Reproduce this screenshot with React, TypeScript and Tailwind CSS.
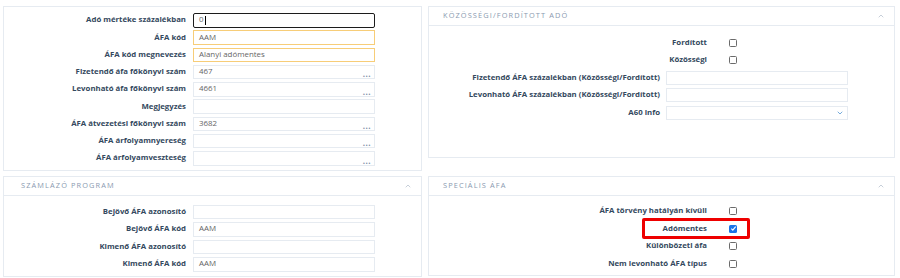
import { ChevronDown, ChevronUp } from "lucide-react";

type FieldProps = {
  label: string;
  value?: string;
  dots?: boolean;
  tone?: "focus" | "warn" | "plain";
};

const Field = ({ label, value = "", dots, tone = "plain" }: FieldProps) => {
  const border =
    tone === "focus"
      ? "border-[1.5px] border-[#1c1c1c] rounded-[2px]"
      : tone === "warn"
        ? "border border-[#f7cd78]"
        : "border border-[#e6ebf1]";
  return (
    <div className="flex items-center h-[14.5px]">
      <div className="w-[182px] shrink-0 text-right font-bold text-[7.8px] text-[#34495e]">
        {label}
      </div>
      <div
        className={`relative ml-[7px] w-[182px] h-[14.5px] flex items-center pl-[5px] text-[7.9px] text-[#666] bg-white ${border}`}
      >
        {value}
        {tone === "focus" && <span className="ml-[1px] w-[1px] h-[9px] bg-black" />}
        {dots && (
          <span className="absolute right-[3px] bottom-[0px] text-[8px] leading-[8px] font-bold text-[#7d8ea6] tracking-[0.5px]">
            ...
          </span>
        )}
      </div>
    </div>
  );
};

const CheckRow = ({
  label,
  checked,
  marked,
}: {
  label: string;
  checked?: boolean;
  marked?: boolean;
}) => (
  <div className="relative flex items-center h-[15px]">
    <div className="w-[278px] shrink-0 text-right font-bold text-[7.8px] text-[#34495e]">
      {label}
    </div>
    <div className="ml-[22px]">
      {checked ? (
        <div className="w-[8px] h-[8px] rounded-[1.5px] bg-[#1a73e8] flex items-center justify-center">
          <svg viewBox="0 0 8 8" className="w-[7px] h-[7px]">
            <path d="M1.5 4.2 L3.2 5.8 L6.5 1.8" stroke="white" strokeWidth="1.3" fill="none" />
          </svg>
        </div>
      ) : (
        <div className="w-[8px] h-[8px] rounded-[1.5px] border border-[#6b6b6b] bg-white" />
      )}
    </div>
    {marked && (
      <span className="absolute left-[213px] top-[-3px] w-[108px] h-[21px] border-[3px] border-[#ee0000] rounded-[2px]" />
    )}
  </div>
);

const WideField = ({ label, select }: { label: string; select?: boolean }) => (
  <div className="flex items-center h-[15px]">
    <div className="w-[231px] shrink-0 text-right font-bold text-[7.8px] text-[#34495e]">
      {label}
    </div>
    <div className="relative ml-[6px] w-[182px] h-[14px] border border-[#e6ebf1] bg-white flex items-center justify-end pr-[3px]">
      {select && <ChevronDown className="w-[8px] h-[8px] text-[#5b9bd5]" strokeWidth={2.5} />}
    </div>
  </div>
);

const Header = ({ title, pad }: { title: string; pad: string }) => (
  <div
    className={`flex items-center justify-between h-[19px] border-b border-[#e6ebf1] ${pad} pr-[9px]`}
  >
    <span className="text-[7.4px] tracking-[0.15em] text-[#8a9ab0] uppercase">{title}</span>
    <ChevronUp className="w-[8px] h-[8px] text-[#aab6c5]" strokeWidth={2} />
  </div>
);

export default function App() {
  return (
    <div
      className="w-[900px] h-[278px] bg-white overflow-hidden"
      style={{ fontFamily: '"Open Sans", "Noto Sans", sans-serif' }}
    >
      <div className="grid grid-cols-[419px_467px] gap-x-[6px] gap-y-[5px] items-start pt-[6px] pl-[3px]">
        <div className="border border-[#e6ebf1] bg-white pt-[6px] pb-[4px] flex flex-col gap-[2.75px]">
          <Field label="Adó mértéke százalékban" value="0" tone="focus" />
          <Field label="ÁFA kód" value="AAM" tone="warn" />
          <Field label="ÁFA kód megnevezés" value="Alanyi adómentes" tone="warn" />
          <Field label="Fizetendő áfa főkönyvi szám" value="467" dots />
          <Field label="Levonható áfa főkönyvi szám" value="4661" dots />
          <Field label="Megjegyzés" />
          <Field label="ÁFA átvezetési főkönyvi szám" value="3682" dots />
          <Field label="ÁFA árfolyamnyereség" dots />
          <Field label="ÁFA árfolyamveszteség" dots />
        </div>

        <div className="border border-[#e6ebf1] bg-white h-[152px]">
          <Header title="Közösségi/fordított adó" pad="pl-[14px]" />
          <div className="pt-[9px] flex flex-col gap-[2.5px]">
            <CheckRow label="Fordított" />
            <CheckRow label="Közösségi" />
            <WideField label="Fizetendő ÁFA százalékban (Közösségi/Fordított)" />
            <WideField label="Levonható ÁFA százalékban (Közösségi/Fordított)" />
            <WideField label="A60 info" select />
          </div>
        </div>

        <div className="border border-[#e6ebf1] bg-white h-[101px]">
          <Header title="Számlázó program" pad="pl-[17px]" />
          <div className="pt-[9px] flex flex-col gap-[3px]">
            <Field label="Bejövő ÁFA azonosító" />
            <Field label="Bejövő ÁFA kód" value="AAM" />
            <Field label="Kimenő ÁFA azonosító" />
            <Field label="Kimenő ÁFA kód" value="AAM" />
          </div>
        </div>

        <div className="border border-[#e6ebf1] bg-white h-[100px]">
          <Header title="Speciális ÁFA" pad="pl-[14px]" />
          <div className="pt-[8px] flex flex-col gap-[2.5px]">
            <CheckRow label="ÁFA törvény hatályán kívüli" />
            <CheckRow label="Adómentes" checked marked />
            <CheckRow label="Különbözeti áfa" />
            <CheckRow label="Nem levonható ÁFA típus" />
          </div>
        </div>
      </div>
    </div>
  );
}
